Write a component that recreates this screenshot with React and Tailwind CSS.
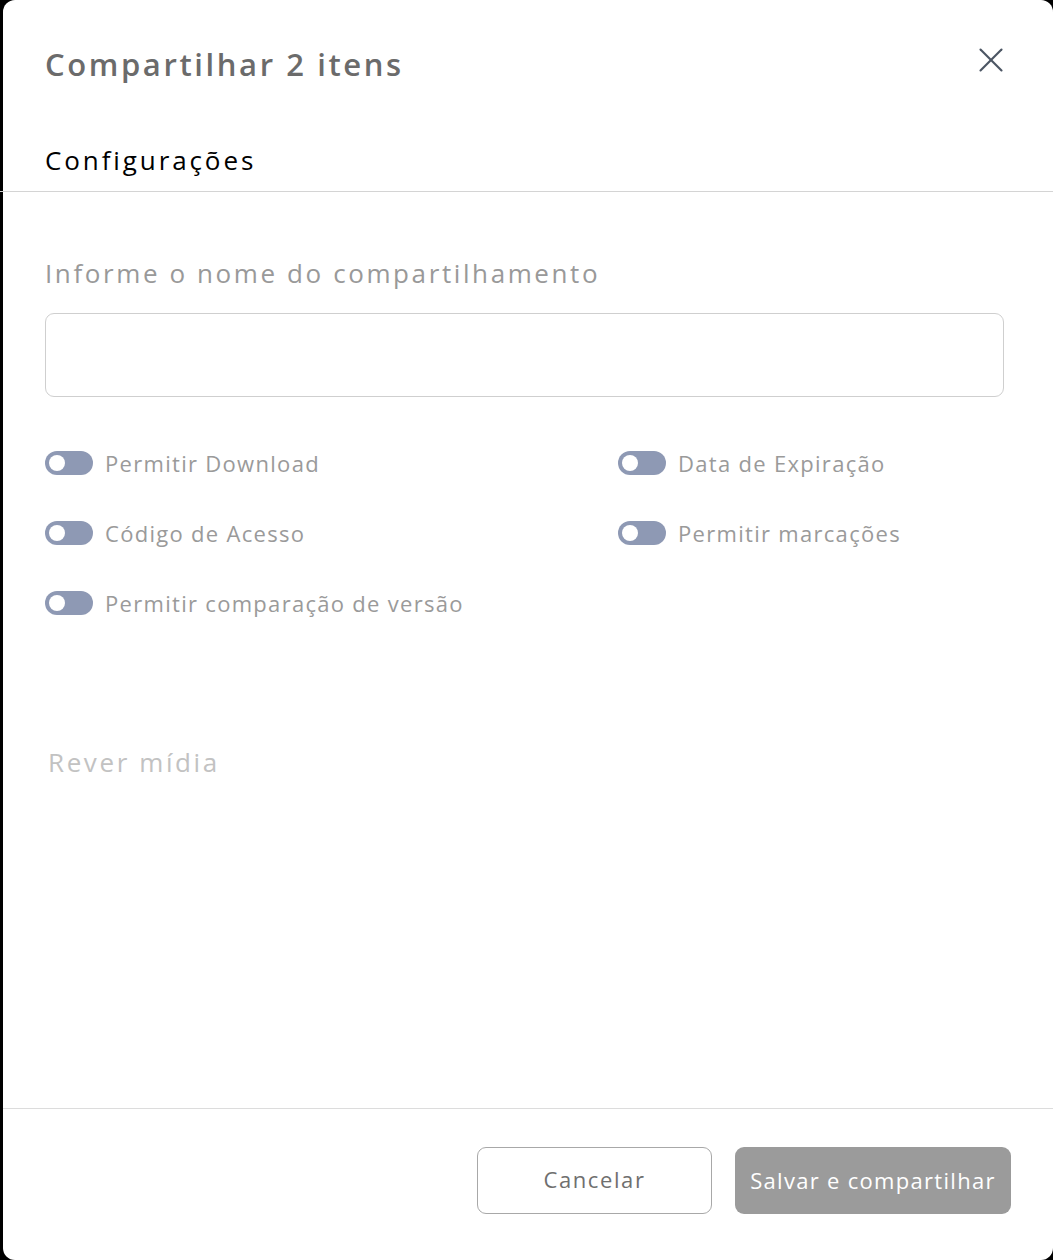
import { X } from "lucide-react";

const toggles = [
  ["Permitir Download", "Data de Expiração"],
  ["Código de Acesso", "Permitir marcações"],
  ["Permitir comparação de versão", null],
];

function Toggle({ label }) {
  return (
    <label className="flex items-center gap-3 h-6">
      <span className="relative w-12 h-6 rounded-full bg-[#8e99b4] shrink-0">
        <span className="absolute left-1 top-1 w-4 h-4 rounded-full bg-white" />
      </span>
      <span className="text-[22px] tracking-[1.3px] text-[#9a9a9a] whitespace-nowrap">{label}</span>
    </label>
  );
}

export default function App() {
  return (
    <div className="min-h-screen bg-black pl-[3px]" style={{ fontFamily: '"Open Sans", sans-serif' }}>
      <div className="bg-white rounded-[12px] h-[1260px] flex flex-col">
        {/* Header */}
        <div className="h-[112px] flex items-start justify-between pl-[42px] pr-[41px] pt-[42px]">
          <h1 className="text-[31px] font-semibold tracking-[2.6px] text-[#6b6b6b] leading-[44px]">
            Compartilhar 2 itens
          </h1>
          <button className="text-[#4b5563] w-[42px] h-[42px] -mt-[3px]">
            <X className="w-[42px] h-[42px]" strokeWidth={1.2} />
          </button>
        </div>

        {/* Tab */}
        <div className="h-[80px] border-b border-[#d4d4d4] px-[42px] pt-[30px] -ml-[3px]">
          <h2 className="text-[26px] text-black font-medium tracking-[2.9px] leading-[36px] pl-[3px]">
            Configurações
          </h2>
        </div>

        {/* Body */}
        <div className="pl-[42px] pr-[49px] pt-[61px]">
          <p className="text-[26px] tracking-[2.6px] text-[#999999] leading-[40px]">
            Informe o nome do compartilhamento
          </p>
          <input
            className="mt-[20px] w-full h-[84px] border border-[#cfcfcf] rounded-[9px] px-4 text-[22px] outline-none"
            type="text"
          />

          <div className="mt-[54px] grid grid-cols-[573px_1fr] gap-y-[46px]">
            {toggles.flat().map((t, i) => (t ? <Toggle key={i} label={t} /> : <div key={i} />))}
          </div>

          <p className="mt-[127px] pl-[3px] text-[26px] tracking-[2.6px] text-[#c2c2c2] leading-[40px]">
            Rever mídia
          </p>
        </div>

        <div className="flex-1" />

        {/* Footer */}
        <div className="h-[152px] border-t border-[#dcdcdc] flex justify-end items-start gap-[23px] pt-[38px] pr-[42px]">
          <button className="w-[235px] h-[67px] rounded-[9px] border border-[#a8a8a8] text-[22px] tracking-[1.6px] text-[#6f6f6f] pb-[3px]">
            Cancelar
          </button>
          <button className="w-[276px] h-[67px] rounded-[9px] bg-[#9b9b9b] text-[22px] tracking-[1.3px] text-white pb-[1px]">
            Salvar e compartilhar
          </button>
        </div>
      </div>
    </div>
  );
}
